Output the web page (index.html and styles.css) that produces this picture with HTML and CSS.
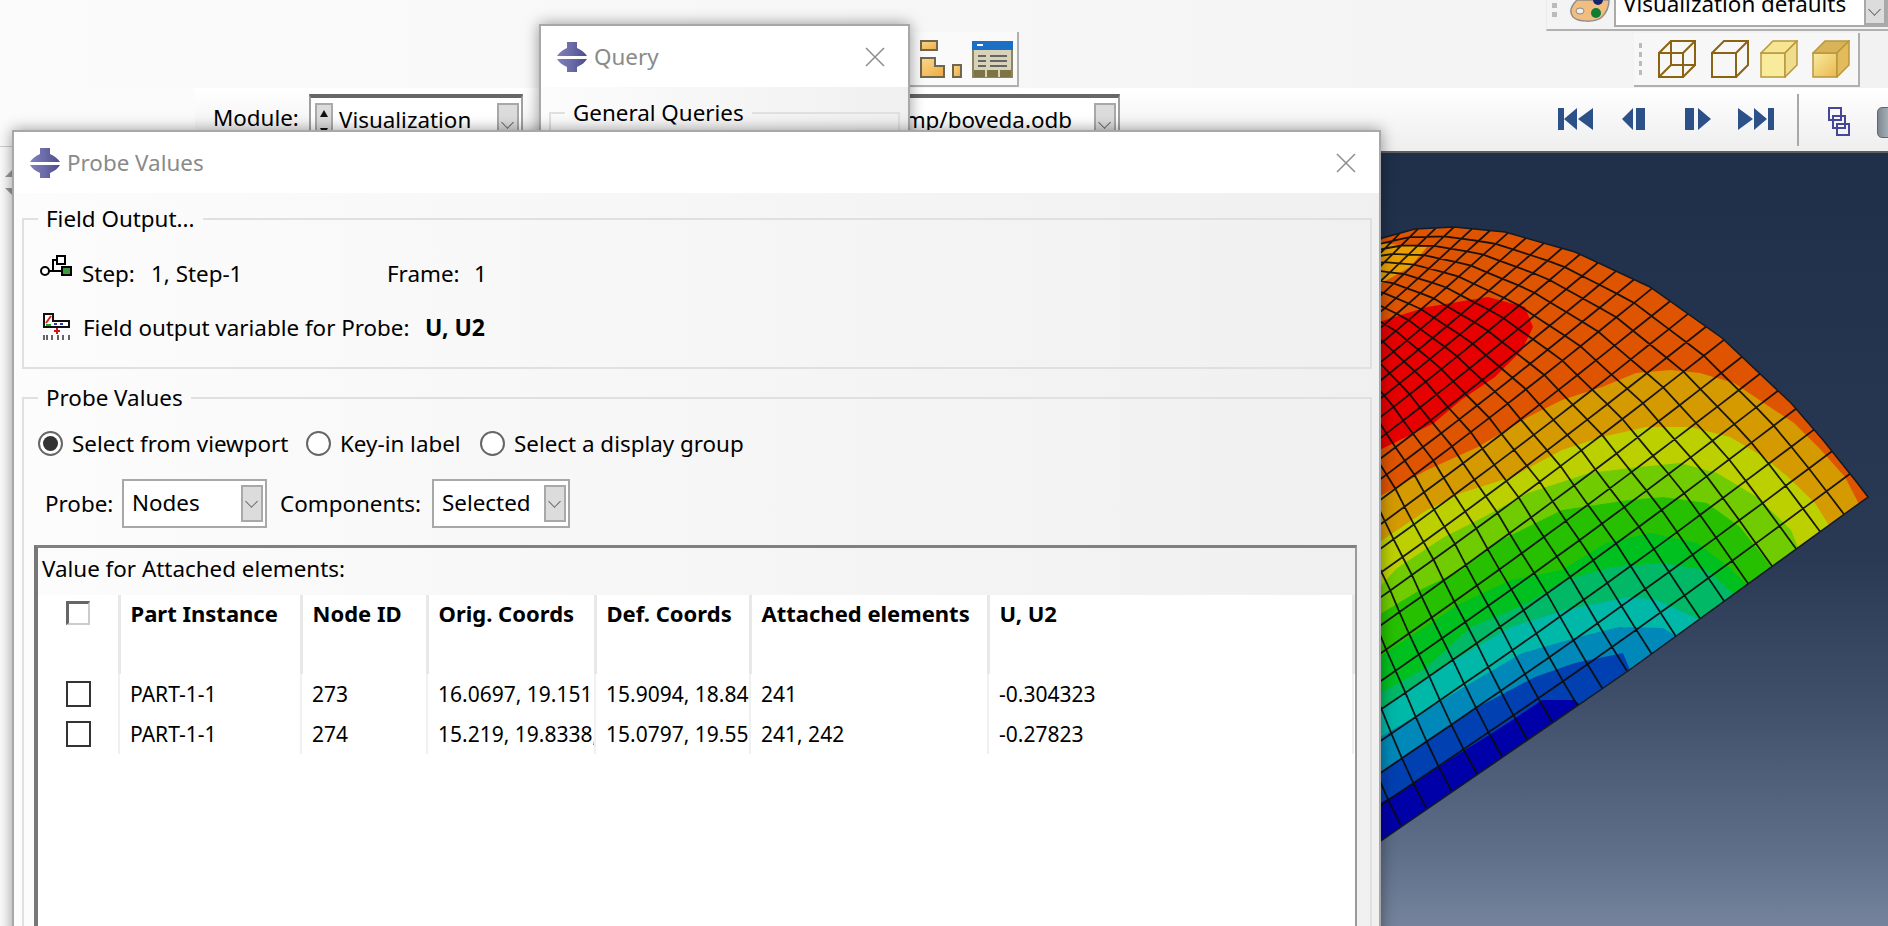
FILE: index.html
```html
<!DOCTYPE html>
<html>
<head>
    <meta charset="utf-8" />
    <title>Probe Values</title>
    <link rel="stylesheet" href="styles.css">
</head>
<body>
<div class="app">
    <div class="toolbars">
        <div class="tools-box">
            <svg width="42" height="38" viewBox="0 0 42 38">
                <defs>
                    <linearGradient id="gold" x1="0" y1="0" x2="1" y2="1">
                        <stop offset="0" stop-color="#fbd98e"/>
                        <stop offset="1" stop-color="#eda93f"/>
                    </linearGradient>
                </defs>
                <rect x="1" y="1" width="16" height="9" fill="url(#gold)" stroke="#6f6650" stroke-width="2"/>
                <path d="M1 18h14v8h9v11H1z" fill="url(#gold)" stroke="#6f6650" stroke-width="2"/>
                <rect x="33" y="25" width="8" height="12" fill="url(#gold)" stroke="#6f6650" stroke-width="2"/>
            </svg>
            <svg width="41" height="37" viewBox="0 0 41 37">
                <rect x="1" y="1" width="39" height="35" fill="#d8d2b8" stroke="#8c8562" stroke-width="2"/>
                <rect x="0" y="0" width="41" height="9" fill="#1b6fc4"/>
                <rect x="5" y="3" width="6" height="2" fill="#fff"/>
                <path d="M6 15h8M6 20h8M6 25h8M18 15h17M18 20h17M18 25h17" stroke="#666" stroke-width="2"/>
                <rect x="2" y="29" width="37" height="7" fill="#7c7444"/>
                <path d="M14 29v7M27 29v7" stroke="#d8d2b8" stroke-width="2"/>
            </svg>
        </div>
        <div class="tools-right">
            <div class="palette-strip">
                <div class="grip"><i></i><i></i></div>
                <svg class="icon-palette" width="42" height="22" viewBox="0 0 42 22">
                    <path d="M8 0C2 6 0 12 4 17c5 5 22 6 29 0 5-5 7-11 7-17z" fill="#f2bd80" stroke="#8f8f8f" stroke-width="1.5"/>
                    <ellipse cx="11" cy="11" rx="4" ry="3" fill="#eee" stroke="#888"/>
                    <circle cx="29" cy="0" r="5" fill="#14246e"/>
                    <circle cx="27" cy="13" r="5" fill="#0f7c32"/>
                </svg>
                <div class="combo combo-wide">
                    <span class="combo-text">Visualization defaults</span>
                    <span class="drop"></span>
                </div>
            </div>
            <div class="cube-strip">
                <div class="grip grip-tall"><i></i><i></i><i></i><i></i></div>
                <svg width="38" height="38" viewBox="0 0 38 38" fill="none" stroke="#8a6412" stroke-width="2">
                    <path d="M1 13h24v24H1zM13 1h24v24H13zM1 13L13 1M25 13L37 1M1 37l12-12M25 37l12-12"/>
                </svg>
                <svg class="cube-second" width="38" height="38" viewBox="0 0 38 38" fill="none" stroke="#8a6412" stroke-width="2">
                    <path d="M1 13h24v24H1zM1 13L13 1h24v24L25 37M25 13L37 1"/>
                </svg>
                <svg class="cube-third" width="38" height="38" viewBox="0 0 38 38" stroke="#b8983c" stroke-width="1.5">
                    <path d="M1 13h24v24H1z" fill="#f8ec9c"/>
                    <path d="M1 13L13 1h24L25 13z" fill="#f6e592"/>
                    <path d="M25 13L37 1v24L25 37z" fill="#efdc8c"/>
                </svg>
                <svg class="cube-fourth" width="38" height="38" viewBox="0 0 38 38" stroke="#b8983c" stroke-width="1.5">
                    <defs>
                        <linearGradient id="cube" x1="0" y1="0" x2="1" y2="1">
                            <stop offset="0" stop-color="#f9eba0"/>
                            <stop offset="1" stop-color="#e9b84e"/>
                        </linearGradient>
                    </defs>
                    <path d="M1 13h24v24H1z" fill="url(#cube)"/>
                    <path d="M1 13L13 1h24L25 13z" fill="#d9b358"/>
                    <path d="M25 13L37 1v24L25 37z" fill="#e4bb5c"/>
                </svg>
            </div>
        </div>
    </div>

    <div class="context">
        <div class="context-gap"></div>
        <div class="context-bar">
            <span class="module-label">Module:</span>
            <div class="combo combo-module">
                <span class="spin"><b class="up"></b><b class="down"></b></span>
                <span class="combo-text">Visualization</span>
                <span class="drop"></span>
            </div>
            <div class="combo combo-file">
                <span class="combo-text">C:/temp/boveda.odb</span>
                <span class="drop"></span>
            </div>
            <div class="playback">
                <svg width="35" height="22" viewBox="0 0 35 22" fill="#2c5088"><path d="M0 0h6v22H0zM6 11L19 0v22zM20 11L35 0v22z"/></svg>
                <svg class="play-prev" width="25" height="22" viewBox="0 0 25 22" fill="#2c5088"><path d="M0 11L11 0v22zM14 0h9v22h-9z"/></svg>
                <svg class="play-next" width="26" height="22" viewBox="0 0 26 22" fill="#2c5088"><path d="M0 0h9v22H0zM13 0l13 11-13 11z"/></svg>
                <svg class="play-last" width="36" height="22" viewBox="0 0 36 22" fill="#2c5088"><path d="M0 0l15 11L0 22zM16 0l13 11-13 11zM30 0h6v22h-6z"/></svg>
            </div>
            <div class="bar-sep"></div>
            <svg class="icon-links" width="22" height="29" viewBox="0 0 22 29" fill="none" stroke="#46469a" stroke-width="2">
                <rect x="1" y="1" width="12" height="12"/>
                <rect x="5" y="9" width="12" height="12"/>
                <rect x="9" y="17" width="12" height="11"/>
            </svg>
            <span class="icon-cyl"></span>
        </div>
    </div>

    <div class="main">
        <div class="side">
            <i class="arrow-up"></i>
            <i class="arrow-down"></i>
        </div>
        <div class="viewport">
            <svg class="dome" width="507" height="773" viewBox="1381 153 507 773">
                <defs>
                    <clipPath id="domeClip">
                        <path d="M1868 497L1855 480L1823 440L1791 403L1722 338L1650 287L1575 252L1505 232L1454 227L1415 229L1375 240L1375 845L1404 825L1628 671z"/>
                    </clipPath>
                </defs>
                <g clip-path="url(#domeClip)">
                    <rect x="1375" y="220" width="500" height="630" fill="#de5400"/>
                    <path fill="#e9a000" d="M1375 243L1427 247L1410 267L1375 287z"/>
                    <path fill="#e60000" d="M1375 323L1427 307L1488 297L1525 307L1533 327L1522 350L1495 377L1461 400L1434 423L1394 443L1375 452z"/>
                    <path fill="#d49a00" d="M1375 499L1427 470L1478 447L1528 417L1562 400L1602 387L1636 373L1670 370L1700 373L1734 383L1764 403L1794 423L1821 450L1845 477L1862 510L1880 900L1375 900z"/>
                    <path fill="#bcd000" d="M1375 545L1427 510L1461 493L1512 477L1562 450L1602 437L1646 427L1690 427L1730 437L1764 457L1788 477L1815 503L1835 535L1880 900L1375 900z"/>
                    <path fill="#70cc00" d="M1375 592L1397 568L1444 537L1478 520L1528 493L1589 473L1639 467L1680 463L1717 473L1757 497L1791 530L1805 565L1880 900L1375 900z"/>
                    <path fill="#26c000" d="M1375 617L1420 590L1461 570L1495 543L1562 510L1629 500L1663 497L1707 503L1740 527L1764 557L1780 580L1880 900L1375 900z"/>
                    <path fill="#00c020" d="M1375 660L1461 603L1511 580L1562 570L1606 543L1650 533L1697 543L1730 568L1752 590L1880 900L1375 900z"/>
                    <path fill="#00b866" d="M1375 696L1427 667L1471 627L1528 603L1565 580L1612 567L1663 563L1707 570L1735 595L1880 900L1375 900z"/>
                    <path fill="#00b8a8" d="M1375 713L1407 690L1454 660L1511 627L1565 610L1629 597L1656 600L1705 622L1880 900L1375 900z"/>
                    <path fill="#0088b8" d="M1375 740L1421 713L1471 683L1522 653L1579 637L1619 627L1663 628L1682 640L1880 900L1375 900z"/>
                    <path fill="#0040b0" d="M1375 776L1427 740L1478 707L1535 677L1575 663L1623 653L1632 675L1880 900L1375 900z"/>
                    <path fill="#0000a8" d="M1375 806L1404 790L1454 757L1508 723L1542 700L1575 700L1585 710L1880 900L1375 900z"/>
                    <path id="meshLines" fill="none" stroke="#0c0c0c" stroke-width="1.8" stroke-opacity="0.92"/>
                </g>
                <path d="M1868 497L1855 480L1823 440L1791 403L1722 338L1650 287L1575 252L1505 232L1454 227L1415 229L1375 240L1375 845L1404 825L1628 671z" fill="none" stroke="#141a24" stroke-width="1.5"/>
            </svg>
        </div>
    </div>

    <div class="window query-window">
        <div class="win-title">
            <svg class="abq" width="30" height="30" viewBox="0 0 30 30"><use href="#abqLogo"/></svg>
            <span class="win-name">Query</span>
            <svg class="win-close" width="20" height="20" viewBox="0 0 20 20"><path d="M1 1l18 18M19 1L1 19" stroke="#8c8c8c" stroke-width="1.5"/></svg>
        </div>
        <div class="win-body">
            <fieldset class="group">
                <legend>General Queries</legend>
            </fieldset>
        </div>
    </div>

    <div class="window probe-window">
        <div class="win-title">
            <svg class="abq" width="30" height="30" viewBox="0 0 30 30">
                <defs>
                    <linearGradient id="abqFill" x1="0" y1="0" x2="1" y2="0">
                        <stop offset="0" stop-color="#8080bc"/>
                        <stop offset="0.5" stop-color="#6a6aa8"/>
                        <stop offset="1" stop-color="#4c4c8c"/>
                    </linearGradient>
                    <g id="abqLogo">
                        <path d="M10 0h10v6c5 2 8 5 10 8H0c2-3 5-6 10-8zM0 17h30c-2 3-5 6-10 8v5H10v-5c-5-2-8-5-10-8z" fill="url(#abqFill)"/>
                    </g>
                </defs>
                <use href="#abqLogo"/>
            </svg>
            <span class="win-name">Probe Values</span>
            <svg class="win-close" width="20" height="20" viewBox="0 0 20 20"><path d="M1 1l18 18M19 1L1 19" stroke="#8c8c8c" stroke-width="1.5"/></svg>
        </div>
        <div class="win-body">
            <fieldset class="group group-field">
                <legend>Field Output...</legend>
                <div class="field-row">
                    <svg class="icon-step" width="32" height="24" viewBox="0 0 32 24" fill="none" stroke="#000" stroke-width="2">
                        <circle cx="5" cy="16" r="4" fill="#fff"/>
                        <path d="M9 16h13M13 16V5h4"/>
                        <rect x="17" y="1" width="8" height="8" fill="#fff"/>
                        <rect x="22" y="12" width="9" height="8" fill="#3d9a3d"/>
                    </svg>
                    <span class="step-label">Step:</span>
                    <span class="step-value">1, Step-1</span>
                    <span class="frame-label">Frame:</span>
                    <span>1</span>
                </div>
                <div class="field-row field-row-var">
                    <svg class="icon-var" width="27" height="27" viewBox="0 0 27 27">
                        <path d="M1 1h9v7h16v6H1z" fill="#fff" stroke="#111" stroke-width="2"/>
                        <path d="M3 10l5-7" stroke="#d22" stroke-width="2"/>
                        <path d="M3 12h5" stroke="#2a2" stroke-width="2"/>
                        <path d="M11 11h3M17 11h3" stroke="#33c" stroke-width="2"/>
                        <path d="M14 15v6M11 18h6" stroke="#d01818" stroke-width="2"/>
                        <path d="M1 22v5M4 22v5M9 22v5M15 22v5M20 22v5M26 22v5" stroke="#333" stroke-width="1.5"/>
                    </svg>
                    <span class="var-label">Field output variable for Probe:</span>
                    <b class="var-value">U, U2</b>
                </div>
            </fieldset>
            <fieldset class="group group-probe">
                <legend>Probe Values</legend>
                <div class="radio-row">
                    <label class="radio"><i class="radio-mark radio-on"></i>Select from viewport</label>
                    <label class="radio"><i class="radio-mark"></i>Key-in label</label>
                    <label class="radio"><i class="radio-mark"></i>Select a display group</label>
                </div>
                <div class="probe-row">
                    <span class="probe-label">Probe:</span>
                    <div class="combo combo-box combo-nodes">
                        <span class="combo-text">Nodes</span>
                        <span class="drop"></span>
                    </div>
                    <span class="comp-label">Components:</span>
                    <div class="combo combo-box combo-comp">
                        <span class="combo-text">Selected</span>
                        <span class="drop"></span>
                    </div>
                </div>
                <div class="listbox">
                    <div class="list-caption">Value for Attached elements:</div>
                    <div class="list-body">
                        <table class="values">
                            <colgroup>
                                <col class="c0"><col class="c1"><col class="c2"><col class="c3"><col class="c4"><col class="c5"><col class="c6">
                            </colgroup>
                            <thead>
                                <tr>
                                    <th><span class="check check-head"></span></th>
                                    <th>Part Instance</th>
                                    <th>Node ID</th>
                                    <th>Orig. Coords</th>
                                    <th>Def. Coords</th>
                                    <th>Attached elements</th>
                                    <th>U, U2</th>
                                </tr>
                            </thead>
                            <tbody>
                                <tr>
                                    <td><span class="check"></span></td>
                                    <td>PART-1-1</td>
                                    <td>273</td>
                                    <td>16.0697, 19.151</td>
                                    <td>15.9094, 18.84</td>
                                    <td>241</td>
                                    <td>-0.304323</td>
                                </tr>
                                <tr>
                                    <td><span class="check"></span></td>
                                    <td>PART-1-1</td>
                                    <td>274</td>
                                    <td>15.219, 19.8338,</td>
                                    <td>15.0797, 19.55</td>
                                    <td>241, 242</td>
                                    <td>-0.27823</td>
                                </tr>
                            </tbody>
                        </table>
                    </div>
                </div>
            </fieldset>
        </div>
    </div>
</div>
<script src="mesh.js"></script>
</body>
</html>
```
FILE: styles.css
```css
* {
    box-sizing: border-box;
}

html, body {
    margin: 0;
    padding: 0;
}

body {
    font-family: "Noto Sans", "Open Sans", sans-serif;
    font-size: 22.4px;
    color: #000;
    overflow: hidden;
}

.app {
    position: relative;
    width: 1888px;
    height: 926px;
    overflow: hidden;
    background: #fbfbfb;
}

/* top toolbars */
.toolbars {
    display: flex;
    height: 88px;
    background: linear-gradient(90deg, #fbfbfb, #f2f2f2);
}

.tools-box {
    display: flex;
    align-items: flex-end;
    gap: 10px;
    flex: none;
    width: 119px;
    height: 55px;
    margin: 32px 0 0 900px;
    padding: 0 0 7px 20px;
    background: #fafafa;
    border-right: 2px solid #b0b0b0;
    border-bottom: 2px solid #b0b0b0;
}

.tools-right {
    flex: none;
    width: 342px;
    margin-left: auto;
}

.palette-strip {
    display: flex;
    height: 31px;
    padding-left: 5px;
    overflow: hidden;
    border-bottom: 2px solid #b0b0b0;
    border-left: 1px solid #ececec;
}

.grip {
    display: flex;
    flex-direction: column;
    gap: 4px;
    width: 16px;
    padding-top: 3px;
}

.grip i {
    display: block;
    width: 5px;
    height: 5px;
    background: #bbb;
}

.icon-palette {
    margin-left: 1px;
    flex: none;
}

.combo-wide {
    flex: none;
    width: 274px;
    height: 29px;
    margin: -2px 0 0 3px;
    padding-left: 7px;
    background: #fff;
    border: 2px solid #aaa;
    border-top: 0;
}

.combo-wide .combo-text {
    margin-top: -15px;
}

.cube-strip {
    display: flex;
    align-items: flex-start;
    width: 226px;
    height: 54px;
    margin: 2px 0 0 88px;
    padding: 7px 0 0 5px;
    background: #f7f7f7;
    border-right: 2px solid #b0b0b0;
    border-bottom: 2px solid #b0b0b0;
}

.grip-tall {
    width: 4px;
    margin-right: 15px;
}

.grip-tall i {
    width: 3px;
}

.cube-second {
    margin-left: 15px;
}

.cube-third {
    margin-left: 11px;
}

.cube-fourth {
    margin-left: 14px;
}

/* module bar */
.context {
    display: flex;
    height: 65px;
}

.context-gap {
    flex: none;
    width: 195px;
    height: 59px;
    border-bottom: 1px solid #cfcfcf;
}

.context-bar {
    flex: 1;
    display: flex;
    align-items: flex-start;
    min-width: 0;
    padding: 6px 0 0 18px;
    background: linear-gradient(#fff, #eeeeee);
    border-bottom: 2px solid #5e5e5e;
}

.module-label {
    flex: none;
    width: 96px;
    line-height: 48px;
}

.combo {
    display: flex;
    align-items: center;
    line-height: 1;
}

.combo-text {
    flex: 1;
    white-space: nowrap;
}

.drop {
    position: relative;
    flex: none;
    width: 22px;
    background: #dcdcdc;
    border: 2px solid #a8a8a8;
    align-self: stretch;
}

.drop::after {
    content: "";
    position: absolute;
    left: 4px;
    top: 50%;
    width: 8px;
    height: 8px;
    margin-top: -7px;
    border-right: 1.5px solid #666;
    border-bottom: 1.5px solid #666;
    transform: rotate(45deg);
}

.combo-module,
.combo-file {
    flex: none;
    height: 60px;
    padding: 5px 2px 5px 4px;
    background: #fff;
    border: 2px solid #a0a0a0;
    border-top: 4px solid #666;
    align-items: stretch;
}

.combo-module .combo-text,
.combo-file .combo-text {
    line-height: 34px;
}

.combo-module {
    width: 214px;
}

.combo-file {
    width: 576px;
    margin-left: 21px;
    text-align: right;
}

.combo-file .combo-text {
    padding-right: 22px;
}

.spin {
    display: flex;
    flex-direction: column;
    flex: none;
    width: 18px;
    margin-right: 6px;
    background: #dcdcdc;
    border: 2px solid #aaa;
}

.spin b {
    display: block;
    width: 0;
    height: 0;
    margin: 5px auto 6px;
    border-left: 4px solid transparent;
    border-right: 4px solid transparent;
}

.spin .up {
    border-bottom: 7px solid #111;
}

.spin .down {
    border-top: 7px solid #111;
}

.playback {
    display: flex;
    flex: none;
    margin: 14px 0 0 438px;
}

.play-prev {
    margin-left: 29px;
}

.play-next {
    margin-left: 38px;
}

.play-last {
    margin-left: 27px;
}

.bar-sep {
    flex: none;
    width: 2px;
    height: 52px;
    margin-left: 23px;
    background: #a8a8a8;
}

.icon-links {
    flex: none;
    margin: 13px 0 0 29px;
}

.icon-cyl {
    flex: none;
    width: 20px;
    height: 31px;
    margin: 13px 0 0 27px;
    background: linear-gradient(90deg, #7d8890, #c4ccd2);
    border: 1px solid #666;
    border-radius: 5px;
}

/* work area */
.main {
    display: flex;
    height: 773px;
}

.side {
    display: flex;
    flex-direction: column;
    flex: none;
    width: 1381px;
    padding-top: 17px;
    background: #fbfbfb;
}

.arrow-up,
.arrow-down {
    width: 0;
    height: 0;
    margin-left: 5px;
    border-left: 7px solid transparent;
}

.arrow-up {
    border-bottom: 7px solid #999;
}

.arrow-down {
    margin-top: 11px;
    border-top: 7px solid #999;
}

.viewport {
    flex: 1;
    background: linear-gradient(#1f2f4a 0%, #2a3a54 53%, #3f4e69 71%, #5e6e88 90%, #75839c 100%);
}

.dome {
    display: block;
}

/* dialogs */
.window {
    position: absolute;
    background: linear-gradient(90deg, #fcfcfc, #f0f0f0);
    border: 2px solid #a8a8a8;
    border-bottom: 0;
    box-shadow: 0 0 14px rgba(0, 0, 0, 0.4);
}

.query-window {
    left: 539px;
    top: 24px;
    width: 371px;
    height: 160px;
}

.probe-window {
    left: 12px;
    top: 130px;
    width: 1369px;
    height: 830px;
}

.win-title {
    display: flex;
    align-items: center;
    height: 61px;
    padding: 0 23px 0 16px;
    background: #fff;
}

.win-name {
    margin-left: 7px;
    color: #8a8a8a;
}

.win-close {
    margin-left: auto;
}

.win-body {
    padding: 11px 7px 0 8px;
}

.group {
    margin: 0;
    padding: 0 13px 0 10px;
    border: 2px solid #e0e0e0;
    min-width: 0;
}

.group legend {
    margin-left: 4px;
    padding: 0 8px;
    line-height: 30px;
}

.query-window .win-body {
    padding: 11px 8px 0;
}

.query-window .group {
    height: 80px;
}

.query-window .win-title {
    padding-right: 23px;
}

.group-field {
    height: 165px;
    margin-bottom: 14px;
}

.field-row {
    display: flex;
    align-items: center;
    height: 40px;
    margin: 19px 0 0 6px;
}

.field-row-var {
    margin-top: 14px;
}

.icon-step {
    flex: none;
    margin: -13px 10px 0 0;
}

.step-label {
    width: 69px;
}

.step-value {
    width: 236px;
}

.frame-label {
    width: 87px;
}

.icon-var {
    flex: none;
    margin: -2px 13px 0 3px;
}

.var-label {
    width: 342px;
    white-space: nowrap;
}

.var-value {
    font-size: 23px;
}

.group-probe {
    height: 560px;
}

.radio-row {
    display: grid;
    grid-template-columns: 268px 174px auto;
    height: 30px;
    margin: 15px 0 0 4px;
}

.radio {
    display: flex;
    align-items: center;
    gap: 9px;
    white-space: nowrap;
}

.radio-mark {
    display: flex;
    align-items: center;
    justify-content: center;
    width: 25px;
    height: 25px;
    background: #fff;
    border: 2px solid #666;
    border-radius: 50%;
}

.radio-on::after {
    content: "";
    width: 15px;
    height: 15px;
    background: #333;
    border-radius: 50%;
}

.probe-row {
    display: flex;
    align-items: center;
    height: 49px;
    margin: 21px 0 0 11px;
}

.probe-label {
    flex: none;
    width: 77px;
}

.comp-label {
    flex: none;
    width: 152px;
    margin-left: 13px;
    white-space: nowrap;
}

.combo-box {
    flex: none;
    height: 49px;
    padding: 4px 2px 4px 8px;
    background: #fff;
    border: 2px solid #a8a8a8;
}

.combo-nodes {
    width: 145px;
}

.combo-comp {
    width: 138px;
}

.listbox {
    height: 500px;
    margin-top: 17px;
    border: 2px solid #9a9a9a;
    border-top: 3px solid #808080;
    border-left: 4px solid #777;
}

.list-caption {
    height: 47px;
    padding-left: 4px;
    line-height: 42px;
}

.list-body {
    height: 450px;
    background: #fff;
}

.values {
    width: 1315px;
    table-layout: fixed;
    border-collapse: collapse;
    font-size: 21px;
}

.c0 { width: 81px; }
.c1 { width: 182px; }
.c2 { width: 126px; }
.c3 { width: 168px; }
.c4 { width: 155px; }
.c5 { width: 238px; }
.c6 { width: 365px; }

.values th,
.values td {
    padding: 0 0 0 10px;
    overflow: hidden;
    font-weight: normal;
    text-align: left;
    white-space: nowrap;
}

.values th {
    height: 79px;
    padding-top: 3px;
    font-size: 22px;
    font-weight: bold;
    vertical-align: top;
    border-right: 3px solid #e8e8e8;
}

.values td {
    height: 40px;
    border-right: 2px solid #f0f0f0;
}

.values th:first-child,
.values td:first-child {
    padding-left: 28px;
}

.values th:first-child {
    padding-top: 6px;
}

.check {
    display: block;
    width: 25px;
    height: 26px;
    border: 2px solid #333;
}

.check-head {
    width: 24px;
    height: 24px;
    border-width: 3px 2px 2px 3px;
    border-color: #666 #ccc #ccc #666;
}
```
FILE: mesh.js
```js
// grid lines of the shell, two families over the top edge and the lower edge
var corner = [1868, 497];
var topEdge = [[1868, 497], [1855, 480], [1823, 440], [1791, 403], [1722, 338], [1650, 287], [1575, 252], [1505, 232], [1454, 227], [1415, 229], [1381, 238], [1300, 265], [1200, 300]];

function topY(x) {
    for (var k = 0; k < topEdge.length - 1; k++) {
        var a = topEdge[k], b = topEdge[k + 1];
        if (x <= a[0] && x >= b[0]) {
            return a[1] + (b[1] - a[1]) * (a[0] - x) / (a[0] - b[0]);
        }
    }
    return topEdge[topEdge.length - 1][1];
}

function meshPoint(j, i) {
    var tx = 1868 - 18 * j;
    var ty = topY(tx);
    var f = Math.pow(j / 28, 1.5);
    var scaleX = 1 - 0.012 * i;
    var bow = Math.sin(Math.PI * i / 19);
    var bx = (-24.6 * i + 5 * bow) * (1 - 0.5 * f);
    var by = (17.25 * i + 1.5 * bow) * (1 - 0.62 * f);
    return [corner[0] + (tx - corner[0]) * scaleX + bx, ty + by];
}

var d = "";
var i, j, p;
for (i = 1; i < 40; i++) {
    for (j = 0; j <= 34; j++) {
        p = meshPoint(j, i);
        d += (j == 0 ? "M" : "L") + p[0].toFixed(1) + " " + p[1].toFixed(1);
    }
}
for (j = 1; j < 34; j++) {
    for (i = 0; i <= 40; i++) {
        p = meshPoint(j, i);
        d += (i == 0 ? "M" : "L") + p[0].toFixed(1) + " " + p[1].toFixed(1);
    }
}
document.getElementById("meshLines").setAttribute("d", d);
```
